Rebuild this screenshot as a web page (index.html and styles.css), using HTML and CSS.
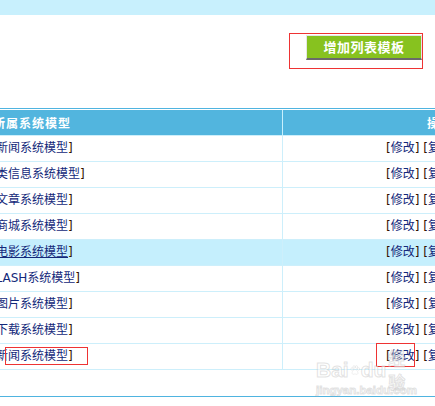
FILE: index.html
```html
<!DOCTYPE html>
<html lang="zh-CN">
<head>
<meta charset="utf-8">
<title>管理列表模板</title>
<link rel="stylesheet" href="styles.css">
</head>
<body>
<div class="topbar"></div>
<div class="toolbar">
  <button class="btn" type="button">增加列表模板</button>
</div>
<div class="list">
  <div class="row head">
    <div class="c1">所属系统模型</div>
    <div class="c2">操作</div>
  </div>
  <div class="row"><div class="c1">[<a href="#">新闻系统模型</a>]</div><div class="c2">[<a href="#">修改</a>] [<a href="#">复制</a>] [<a href="#">删除</a>]</div></div>
  <div class="row"><div class="c1">[<a href="#">分类信息系统模型</a>]</div><div class="c2">[<a href="#">修改</a>] [<a href="#">复制</a>] [<a href="#">删除</a>]</div></div>
  <div class="row"><div class="c1">[<a href="#">文章系统模型</a>]</div><div class="c2">[<a href="#">修改</a>] [<a href="#">复制</a>] [<a href="#">删除</a>]</div></div>
  <div class="row"><div class="c1">[<a href="#">商城系统模型</a>]</div><div class="c2">[<a href="#">修改</a>] [<a href="#">复制</a>] [<a href="#">删除</a>]</div></div>
  <div class="row hover"><div class="c1">[<a href="#">电影系统模型</a>]</div><div class="c2">[<a href="#">修改</a>] [<a href="#">复制</a>] [<a href="#">删除</a>]</div></div>
  <div class="row"><div class="c1">[<a href="#">FLASH系统模型</a>]</div><div class="c2">[<a href="#">修改</a>] [<a href="#">复制</a>] [<a href="#">删除</a>]</div></div>
  <div class="row"><div class="c1">[<a href="#">图片系统模型</a>]</div><div class="c2">[<a href="#">修改</a>] [<a href="#">复制</a>] [<a href="#">删除</a>]</div></div>
  <div class="row"><div class="c1">[<a href="#">下载系统模型</a>]</div><div class="c2">[<a href="#">修改</a>] [<a href="#">复制</a>] [<a href="#">删除</a>]</div></div>
  <div class="row"><div class="c1">[<a href="#">新闻系统模型</a>]</div><div class="c2">[<a href="#">修改</a>] [<a href="#">复制</a>] [<a href="#">删除</a>]</div></div>
  <div class="foot"></div>
</div>

<div class="mark mark-btn"></div>
<div class="mark mark-name"></div>
<div class="mark mark-edit"></div>

<div class="watermark">
  <div class="wm-logo">Bai<svg class="paw" viewBox="0 0 20 20" width="15" height="16"><ellipse cx="4" cy="8" rx="2.2" ry="2.8"/><ellipse cx="8" cy="4" rx="2.2" ry="2.8"/><ellipse cx="13" cy="4" rx="2.2" ry="2.8"/><ellipse cx="17" cy="8" rx="2.2" ry="2.8"/><path d="M10 9c-3 0-6 4-6 7 0 2 2 3 3.5 2.5 1-0.3 1.8-0.7 2.5-0.7s1.5 0.4 2.5 0.7c1.5 0.5 3.5-0.5 3.5-2.5 0-3-3-7-6-7z"/></svg>du<span class="wm-cn">经验</span></div>
  <div class="wm-url">jingyan.baidu.com</div>
</div>
</body>
</html>
```

FILE: styles.css
```css
html, body {
  margin: 0;
  padding: 0;
  overflow: hidden;
  background: #ffffff;
}

body {
  position: relative;
  width: 435px;
  height: 406px;
  font-family: "DejaVu Sans", "Noto Sans CJK SC", sans-serif;
  font-size: 12px;
  color: #331100;
}

.topbar {
  height: 15px;
  background: #c8f0fd;
}

.toolbar {
  box-sizing: border-box;
  height: 93px;
  padding: 20px 13px 0 0;
  display: flex;
  justify-content: flex-end;
  align-items: flex-start;
}

.btn {
  box-sizing: border-box;
  width: 116px;
  height: 25px;
  padding: 0 0 1px;
  margin: 0;
  background: #87c21f;
  border-top: 1px solid #e6e6e6;
  border-left: 1px solid #e6e6e6;
  border-right: 1px solid #e6e6e6;
  border-bottom: 2px solid #6a6a6a;
  color: #ffffff;
  font-family: "Noto Sans CJK SC", sans-serif;
  font-size: 13px;
  font-weight: bold;
  line-height: 21px;
  letter-spacing: 0.5px;
}

.list {
  width: 815px;
  margin-left: -218px;
  border-top: 1px solid #4fb4e0;
  padding-top: 1px;
}

.row {
  display: flex;
  height: 25px;
  line-height: 25px;
  border-top: 1px solid #cdeffb;
  white-space: nowrap;
}

.row .c1 {
  width: 500px;
  flex: none;
  text-align: center;
  border-right: 1px solid #cdeffb;
}

.row .c2 {
  width: 314px;
  flex: none;
  text-align: center;
}

.row.head {
  border-top: 0;
  background: #52b5de;
  color: #ffffff;
  font-family: "Noto Sans CJK SC", sans-serif;
  font-weight: bold;
  letter-spacing: 1px;
}

.row.head .c1 {
  border-right-color: #c8f0fd;
}

.row.hover {
  background: #c5effd;
}

.row a {
  color: #13287a;
  text-decoration: none;
}

.row.hover .c1 a {
  text-decoration: underline;
}

.foot {
  height: 26px;
  border-top: 1px solid #cdeffb;
  border-bottom: 1px solid #4fb4e0;
}

.mark {
  position: absolute;
  box-sizing: border-box;
  border: 1px solid #ee3333;
}

.mark-btn {
  left: 289px;
  top: 33px;
  width: 134px;
  height: 36px;
}

.mark-name {
  left: 5px;
  top: 347px;
  width: 83px;
  height: 18px;
}

.mark-edit {
  left: 376px;
  top: 343px;
  width: 39px;
  height: 24px;
}

.watermark {
  position: absolute;
  left: 316px;
  top: 358px;
  width: 95px;
  color: rgba(255, 255, 255, 0.55);
  -webkit-text-stroke: 1px rgba(170, 170, 170, 0.35);
  pointer-events: none;
}

.wm-logo {
  display: flex;
  align-items: center;
  font-family: "Liberation Sans", sans-serif;
  font-weight: bold;
  font-size: 21px;
  line-height: 24px;
  height: 24px;
}

.paw {
  margin: 0 1px;
  fill: rgba(255, 255, 255, 0.55);
  stroke: rgba(170, 170, 170, 0.35);
  stroke-width: 1;
}

.wm-cn {
  margin-left: 2px;
  font-family: "Noto Sans CJK SC", sans-serif;
  font-size: 17px;
}

.wm-url {
  margin-top: 2px;
  font-family: "Liberation Sans", sans-serif;
  font-size: 11.5px;
  font-weight: bold;
  line-height: 12px;
}
```
